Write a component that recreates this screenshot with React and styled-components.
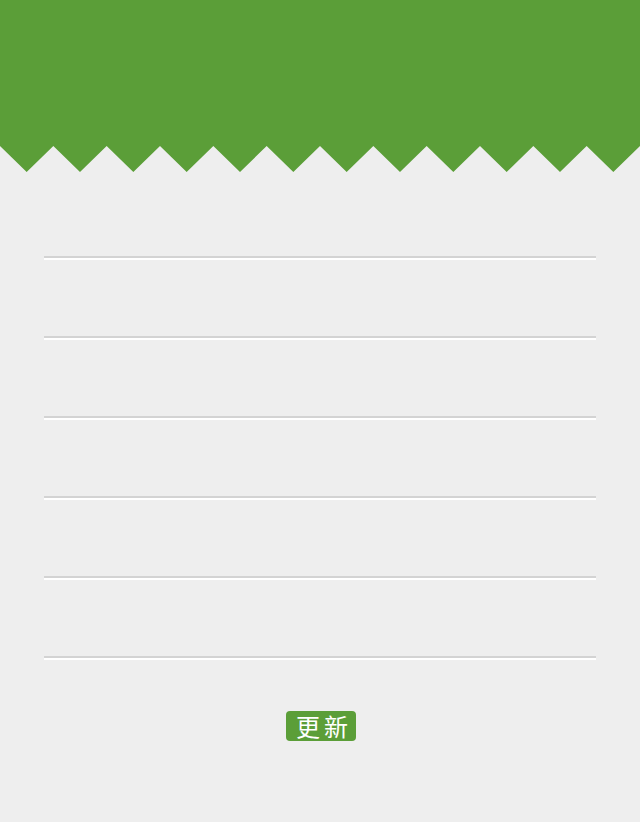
import React from 'react';
import styled, { createGlobalStyle } from 'styled-components';

const GREEN = '#5b9e38';

const GlobalStyle = createGlobalStyle`
  html, body {
    margin: 0;
    padding: 0;
    background: #eeeeee;
    font-family: "Noto Sans CJK SC", "Noto Sans", sans-serif;
  }
`;

function Zigzag() {
  const teeth = 12;
  const w = 640 / teeth;
  let d = 'M0 0 ';
  for (let i = 0; i < teeth; i++) {
    d += `L${i * w + w / 2} 26 L${(i + 1) * w} 0 `;
  }
  d += 'Z';
  return (
    <Teeth viewBox="0 0 640 26" preserveAspectRatio="none">
      <path d={d} fill={GREEN} />
    </Teeth>
  );
}

function App() {
  const rows = [0, 1, 2, 3, 4, 5];
  return (
    <Page>
      <GlobalStyle />
      <Header />
      <Zigzag />
      <Form>
        {rows.map((r) => (
          <Field key={r}>
            <Input type="text" />
          </Field>
        ))}
      </Form>
      <Actions>
        <Button>更新</Button>
      </Actions>
    </Page>
  );
}

const Page = styled.div`
  width: 640px;
  min-height: 822px;
  background: #eeeeee;
  display: flex;
  flex-direction: column;
`;

const Header = styled.div`
  height: 146px;
  background: ${GREEN};
`;

const Teeth = styled.svg`
  display: block;
  width: 100%;
  height: 26px;
`;

const Form = styled.div`
  padding: 6px 44px 0;
  display: flex;
  flex-direction: column;
`;

const Field = styled.div`
  height: 78px;
  border-bottom: 2px solid #d3d3d3;
  box-shadow: 0 2px 0 #ffffff;
  display: flex;
  align-items: flex-end;
`;

const Input = styled.input`
  width: 100%;
  height: 40px;
  border: none;
  background: transparent;
  outline: none;
  font-size: 18px;
`;

const Actions = styled.div`
  display: flex;
  justify-content: center;
  padding: 53px 0 0 2px;
`;

const Button = styled.button`
  width: 70px;
  height: 30px;
  padding: 0 0 0 10px;
  border: none;
  border-radius: 4px;
  background: ${GREEN};
  color: #ffffff;
  font-family: "Noto Sans CJK SC", sans-serif;
  font-size: 24px;
  letter-spacing: 4px;
  line-height: 30px;
  text-align: left;
  white-space: nowrap;
  cursor: pointer;
`;

export default App;
